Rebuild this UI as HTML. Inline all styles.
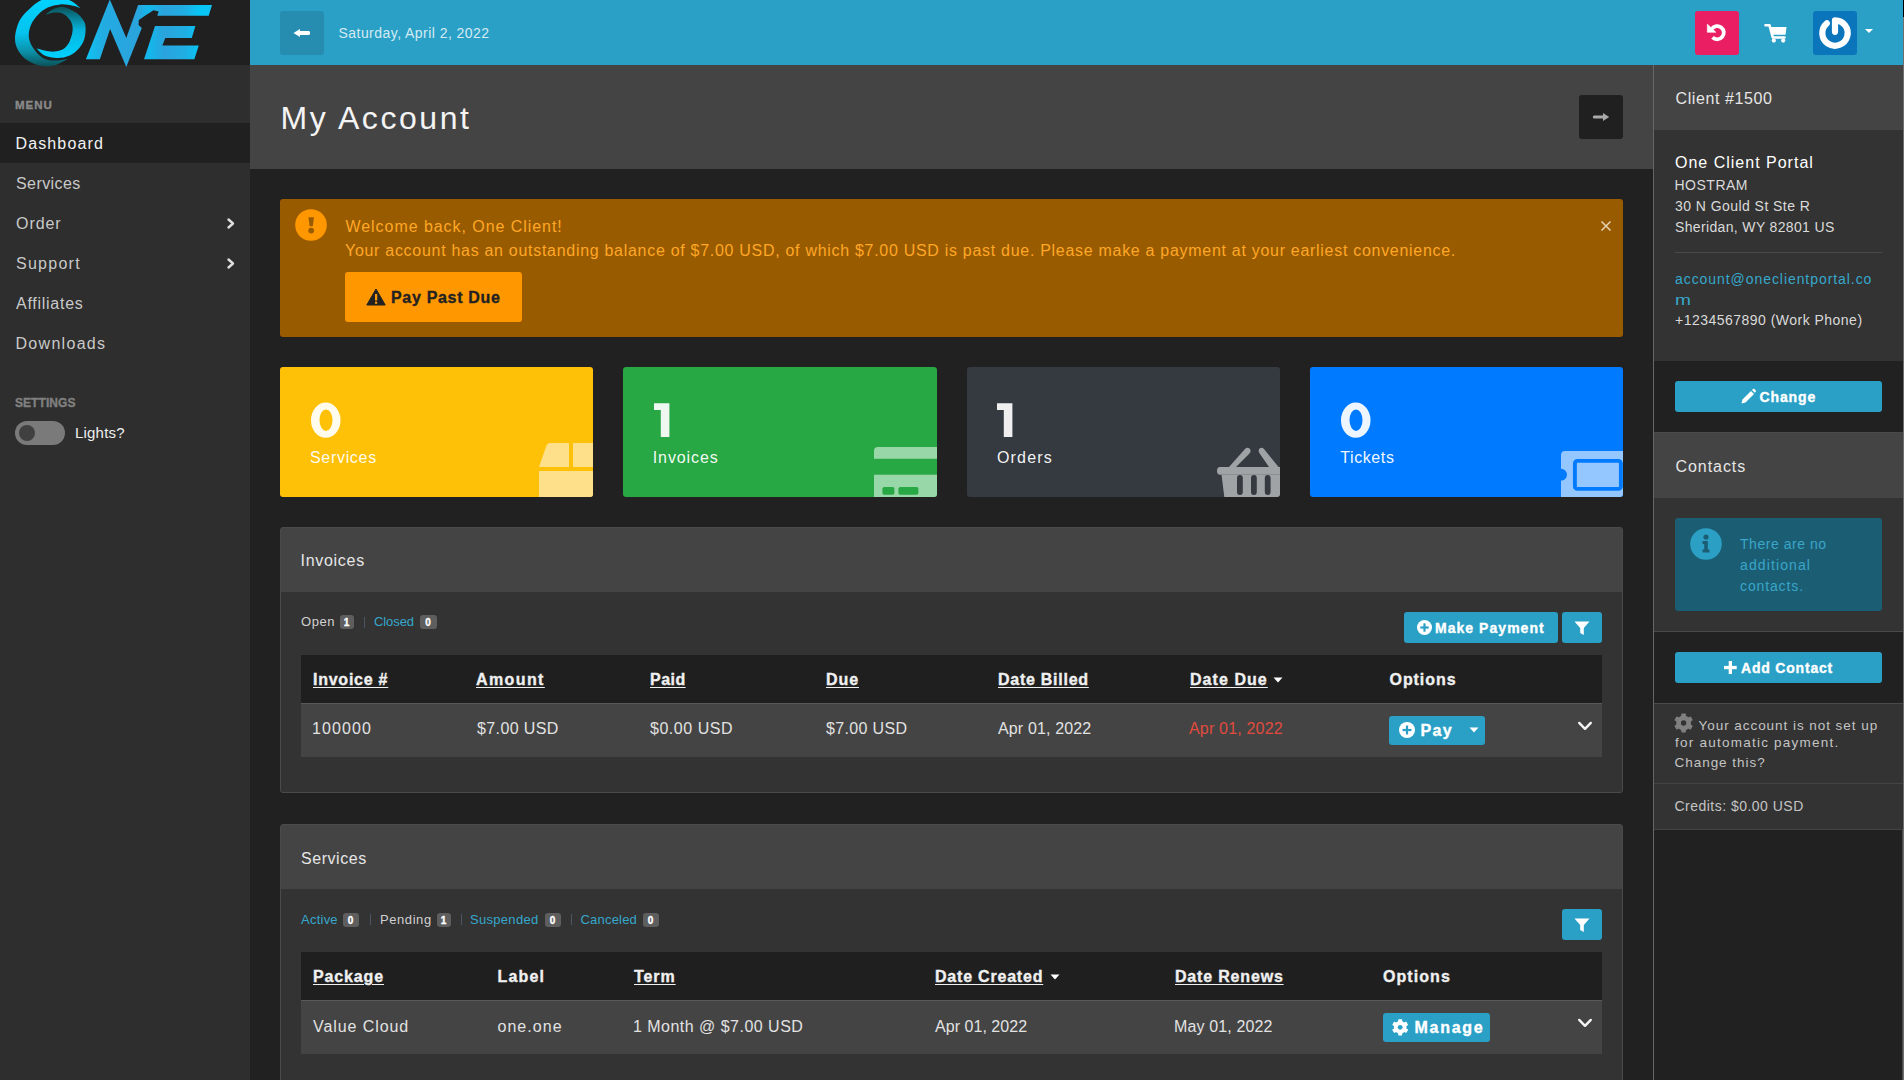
<!DOCTYPE html>
<html><head><meta charset="utf-8"><title>My Account</title>
<style>
html,body{margin:0;padding:0;}
body{width:1904px;height:1080px;overflow:hidden;position:relative;background:#212121;font-family:"Liberation Sans",sans-serif;}
span{display:block;}
svg{overflow:visible;}
</style></head><body>
<div style="position:absolute;left:0px;top:0px;width:250px;height:65px;background:#202020;"></div>
<div style="position:absolute;left:0px;top:65px;width:250px;height:1015px;background:#2e2e2e;"></div>
<svg style="position:absolute;left:0px;top:0px;" width="250" height="70" viewBox="0 0 250 70">
<defs>
<linearGradient id="gO" gradientUnits="userSpaceOnUse" x1="0" y1="0" x2="0" y2="67"><stop offset="0" stop-color="#00d2ff"/><stop offset="0.5" stop-color="#05c2ee"/><stop offset="0.78" stop-color="#0c8ea6"/><stop offset="1" stop-color="#0a4f55"/></linearGradient>
<linearGradient id="gI" gradientUnits="userSpaceOnUse" x1="0" y1="7" x2="0" y2="58"><stop offset="0" stop-color="#0b5358"/><stop offset="0.45" stop-color="#06b4dc"/><stop offset="1" stop-color="#00d2ff"/></linearGradient>
<linearGradient id="gE" gradientUnits="userSpaceOnUse" x1="85" y1="0" x2="213" y2="0"><stop offset="0" stop-color="#0cc6f4"/><stop offset="0.14" stop-color="#22ace2"/><stop offset="0.4" stop-color="#2ba3dc"/><stop offset="0.5" stop-color="#12b8ec"/><stop offset="0.62" stop-color="#2ba3dc"/><stop offset="0.78" stop-color="#20aee3"/><stop offset="0.9" stop-color="#06c6f6"/><stop offset="1" stop-color="#0ec4f2"/></linearGradient>
</defs>
<path fill="url(#gO)" d="M80.5 8.2 C79.2 7.1 75.3 3.3 73.0 1.9 C70.7 0.5 69.9 0.2 66.7 -0.3 C63.5 -0.8 58.2 -1.2 54.0 -1.2 C49.8 -1.1 45.7 -1.8 41.5 0.0 C37.3 1.8 32.6 5.9 28.9 9.4 C25.2 12.9 21.7 16.1 19.4 20.8 C17.1 25.5 15.2 32.9 15.0 37.8 C14.8 42.7 16.1 46.6 18.2 50.4 C20.3 54.2 23.7 57.9 27.6 60.5 C31.5 63.1 37.1 65.3 41.5 66.1 C45.9 66.9 49.8 66.7 54.1 65.5 C58.5 64.3 65.3 60.2 67.6 59.2 C65.3 59.4 58.2 60.7 54.1 60.5 C50.0 60.3 46.1 59.8 42.7 57.9 C39.3 56.0 36.2 52.5 33.9 49.1 C31.6 45.8 29.4 41.8 28.9 37.8 C28.4 33.8 29.2 29.1 30.8 25.2 C32.4 21.3 35.5 17.4 38.3 14.5 C41.1 11.6 44.1 9.3 47.8 7.6 C51.5 5.9 56.2 4.7 60.4 4.4 C64.6 4.1 69.7 5.1 73.0 5.7 C76.3 6.3 79.2 7.8 80.5 8.2 Z"/>
<path fill="url(#gI)" d="M45.3 14.8 C46.8 13.8 51.1 10.1 54.1 8.8 C57.1 7.5 59.8 6.3 63.5 6.9 C67.2 7.5 72.7 10.3 76.1 12.6 C79.5 14.9 82.1 18.2 83.7 20.8 C85.3 23.4 85.5 25.3 85.6 28.3 C85.7 31.3 85.3 35.7 84.3 39.0 C83.2 42.3 81.7 45.2 79.3 47.9 C76.9 50.6 73.5 53.7 69.8 55.4 C66.1 57.1 61.4 57.9 57.2 57.9 C53.0 57.9 48.1 57.0 44.6 55.4 C41.1 53.8 37.8 49.6 36.4 48.5 C37.8 48.8 41.6 49.9 44.6 50.4 C47.6 50.9 51.0 51.8 54.1 51.6 C57.2 51.4 60.9 50.9 63.5 49.1 C66.1 47.3 68.3 44.1 69.8 40.9 C71.3 37.6 72.6 33.0 72.7 29.6 C72.8 26.2 72.0 23.4 70.5 20.8 C69.0 18.2 66.2 15.3 63.5 13.9 C60.8 12.5 57.1 12.4 54.1 12.6 C51.1 12.8 46.8 14.4 45.3 14.8 Z"/>
<path fill="url(#gE)" d="M85.9 59.2 L109.8 -0.5 L126.3 37.9 L138.1 5.1 L212 5.1 L208.7 15.8 L157.2 15.8 L158.7 11.4 L153.5 10.3 Q146 15 138.8 19.9 L138.5 25 L141.8 27.9 L126.3 66.9 L110.1 29 L99.9 59.2 Z"/>
<path fill="url(#gE)" d="M155 26.1 L195.4 26.1 L191.8 37.9 L165.3 37.9 L162.4 45.6 L198.8 45.6 L194.3 59.2 L144 59.2 Z"/>
</svg>
<span id="t_menu" style="position:absolute;left:15.0px;top:99px;font-size:11.5px;font-weight:700;color:#8a8a8a;white-space:pre;line-height:normal;letter-spacing:1.000px;-webkit-text-stroke:0.35px #8a8a8a;">MENU</span>
<div style="position:absolute;left:0px;top:123px;width:250px;height:40px;background:#202020;"></div>
<span id="t_dash" style="position:absolute;left:15.5px;top:135px;font-size:16px;font-weight:400;color:#f2f2f2;white-space:pre;line-height:normal;letter-spacing:1.125px;">Dashboard</span>
<span id="t_svc" style="position:absolute;left:16.0px;top:175px;font-size:16px;font-weight:400;color:#c9c9c9;white-space:pre;line-height:normal;letter-spacing:0.429px;">Services</span>
<span id="t_ord" style="position:absolute;left:16.0px;top:215px;font-size:16px;font-weight:400;color:#c9c9c9;white-space:pre;line-height:normal;letter-spacing:0.950px;">Order</span>
<span id="t_sup" style="position:absolute;left:16.0px;top:255px;font-size:16px;font-weight:400;color:#c9c9c9;white-space:pre;line-height:normal;letter-spacing:1.269px;">Support</span>
<span id="t_aff" style="position:absolute;left:16.0px;top:295px;font-size:16px;font-weight:400;color:#c9c9c9;white-space:pre;line-height:normal;letter-spacing:0.736px;">Affiliates</span>
<span id="t_dl" style="position:absolute;left:15.5px;top:335px;font-size:16px;font-weight:400;color:#c9c9c9;white-space:pre;line-height:normal;letter-spacing:1.300px;">Downloads</span>
<svg style="position:absolute;left:226px;top:218px;" width="10" height="11" viewBox="0 0 10 11"><path d="M2.5 1.5 L7 5.5 L2.5 9.5" fill="none" stroke="#dddddd" stroke-width="2.4" stroke-linecap="round" stroke-linejoin="round"/></svg>
<svg style="position:absolute;left:226px;top:258px;" width="10" height="11" viewBox="0 0 10 11"><path d="M2.5 1.5 L7 5.5 L2.5 9.5" fill="none" stroke="#dddddd" stroke-width="2.4" stroke-linecap="round" stroke-linejoin="round"/></svg>
<span id="t_settings" style="position:absolute;left:15.0px;top:396px;font-size:12px;font-weight:700;color:#808080;white-space:pre;line-height:normal;letter-spacing:0.056px;-webkit-text-stroke:0.35px #808080;">SETTINGS</span>
<div style="position:absolute;left:15px;top:421px;width:50px;height:24px;background:#7a7a7a;border-radius:12px;"></div>
<div style="position:absolute;left:19px;top:425px;width:16px;height:16px;background:#404040;border-radius:8px;"></div>
<span id="t_lights" style="position:absolute;left:75.0px;top:424px;font-size:15px;font-weight:400;color:#eeeeee;white-space:pre;line-height:normal;letter-spacing:0.200px;">Lights?</span>
<div style="position:absolute;left:250px;top:0px;width:1654px;height:65px;background:#2ba0c6;"></div>
<div style="position:absolute;left:280px;top:11px;width:44px;height:44px;background:#268db0;border-radius:3px;"></div>
<svg style="position:absolute;left:293px;top:28px;" width="18" height="10" viewBox="0 0 18 10"><path d="M0.5 5 L7 0.9 L7 3.1 L15.8 3.1 Q17.2 3.1 17.2 5 Q17.2 6.9 15.8 6.9 L7 6.9 L7 9.1 Z" fill="#fff"/></svg>
<span id="t_date" style="position:absolute;left:338.5px;top:25px;font-size:14px;font-weight:400;color:#d4ebf3;white-space:pre;line-height:normal;letter-spacing:0.455px;">Saturday, April 2, 2022</span>
<div style="position:absolute;left:1695px;top:11px;width:44px;height:44px;background:#e91e63;border-radius:3px;"></div>
<svg style="position:absolute;left:1705px;top:22px;" width="22" height="22" viewBox="0 0 22 22"><path d="M7.53 15.37 A6.6 6.6 0 1 0 6.79 6.91" fill="none" stroke="#fff" stroke-width="3.8"/><path d="M2.3 2.1 L2.3 10.3 L10.9 10.3 Z" fill="#fff" stroke="#fff" stroke-width="0.6" stroke-linejoin="round"/></svg>
<svg style="position:absolute;left:1764px;top:22px;" width="24" height="22" viewBox="0 0 24 22"><path d="M1.5 3.2 L5.5 3.2 L8.8 15.5 L20.5 15.5" fill="none" stroke="#fff" stroke-width="2.6" stroke-linecap="round" stroke-linejoin="round"/><path d="M6.5 5 L22.5 5 L21.5 12.8 L8.5 12.8 Z" fill="#fff"/><circle cx="9.8" cy="18.6" r="2.1" fill="#fff"/><circle cx="19.2" cy="18.6" r="2.1" fill="#fff"/></svg>
<div style="position:absolute;left:1813px;top:11px;width:44px;height:44px;background:#0b75bc;border-radius:3px;"></div>
<svg style="position:absolute;left:1813px;top:11px;" width="44" height="44" viewBox="0 0 44 44"><path d="M13.84 12.27 A12.7 12.7 0 1 0 22 9.3 L22 20.8" fill="none" stroke="#fff" stroke-width="6.2" stroke-linecap="round" stroke-linejoin="round"/></svg>
<svg style="position:absolute;left:1864px;top:28px;" width="10" height="6" viewBox="0 0 10 6"><path d="M1 1 L9 1 L5 5 Z" fill="#fff"/></svg>
<div style="position:absolute;left:1902px;top:65px;width:1px;height:1015px;background:#4a4a4a;"></div>
<div style="position:absolute;left:1903px;top:0px;width:1px;height:1080px;background:#6e6e6e;"></div>
<div style="position:absolute;left:1903px;top:0px;width:1px;height:17px;background:#000;"></div>
<div style="position:absolute;left:250px;top:65px;width:1403px;height:104px;background:#444444;"></div>
<span id="t_title" style="position:absolute;left:280.5px;top:100px;font-size:32px;font-weight:400;color:#f4f4f4;white-space:pre;line-height:normal;letter-spacing:2.556px;">My Account</span>
<div style="position:absolute;left:1579px;top:95px;width:44px;height:44px;background:#202020;border-radius:3px;"></div>
<svg style="position:absolute;left:1592px;top:112px;" width="18" height="10" viewBox="0 0 18 10"><path d="M17.2 5 L11 1 L11 3.4 L2.2 3.4 Q0.8 3.4 0.8 5 Q0.8 6.6 2.2 6.6 L11 6.6 L11 9 Z" fill="#a9a9a9"/></svg>
<div style="position:absolute;left:280px;top:199px;width:1343px;height:138px;background:#995b00;border-radius:3px;"></div>
<svg style="position:absolute;left:295px;top:209px;" width="32" height="32" viewBox="0 0 32 32"><circle cx="16" cy="16" r="15.8" fill="#ff9800"/><path d="M13.4 8.2 L19 8.2 L17.8 17.2 L14.6 17.2 Z" fill="#995b00"/><circle cx="16.2" cy="21.6" r="2.9" fill="#995b00"/></svg>
<span id="t_welcome" style="position:absolute;left:345.5px;top:218px;font-size:16px;font-weight:400;color:#ffa726;white-space:pre;line-height:normal;letter-spacing:0.945px;">Welcome back, One Client!</span>
<span id="t_balance" style="position:absolute;left:345.0px;top:242px;font-size:16px;font-weight:400;color:#ffa726;white-space:pre;line-height:normal;letter-spacing:0.706px;">Your account has an outstanding balance of $7.00 USD, of which $7.00 USD is past due. Please make a payment at your earliest convenience.</span>
<svg style="position:absolute;left:1600px;top:220px;" width="12" height="12" viewBox="0 0 12 12"><path d="M1.5 1.5 L10.5 10.5 M10.5 1.5 L1.5 10.5" stroke="#e6d3b3" stroke-width="1.5"/></svg>
<div style="position:absolute;left:345px;top:272px;width:177px;height:50px;background:#ff9800;border-radius:3px;"></div>
<svg style="position:absolute;left:366px;top:288px;" width="20" height="18" viewBox="0 0 20 18"><path d="M10 1 L19.2 17 L0.8 17 Z" fill="#222" stroke="#222" stroke-width="1" stroke-linejoin="round"/><rect x="9" y="6" width="2.2" height="6.5" fill="#ff9800"/><rect x="9" y="13.6" width="2.2" height="2.2" fill="#ff9800"/></svg>
<span id="t_paypast" style="position:absolute;left:391.0px;top:289px;font-size:16px;font-weight:700;color:#222222;white-space:pre;line-height:normal;letter-spacing:0.688px;-webkit-text-stroke:0.35px #222222;">Pay Past Due</span>
<div style="position:absolute;left:280px;top:367px;width:313.25px;height:130px;background:#ffc107;border-radius:3px;"></div>
<svg style="position:absolute;left:311px;top:402px;" width="30" height="36" viewBox="0 0 30 36"><path fill-rule="evenodd" fill="rgba(255,255,255,0.93)" d="M14.75 0.6 A14.75 17.6 0 1 1 14.75 35.8 A14.75 17.6 0 1 1 14.75 0.6 Z M15 7.4 A6.5 10.75 0 1 0 15 28.9 A6.5 10.75 0 1 0 15 7.4 Z"/></svg>
<span id="t_lab0" style="position:absolute;left:310.0px;top:449px;font-size:16px;font-weight:400;color:rgba(255,255,255,0.96);white-space:pre;line-height:normal;letter-spacing:0.683px;">Services</span>
<div style="position:absolute;left:623.25px;top:367px;width:313.25px;height:130px;background:#28a745;border-radius:3px;"></div>
<svg style="position:absolute;left:653.55px;top:403px;" width="16" height="34" viewBox="0 0 16 34"><path fill="rgba(255,255,255,0.92)" d="M0 0.2 L15.4 0.2 L15.4 34 L6.8 34 L6.8 7 L0 7 Z"/></svg>
<span id="t_lab1" style="position:absolute;left:652.78px;top:449px;font-size:16px;font-weight:400;color:rgba(255,255,255,0.96);white-space:pre;line-height:normal;letter-spacing:0.888px;">Invoices</span>
<div style="position:absolute;left:966.5px;top:367px;width:313.25px;height:130px;background:#343a40;border-radius:3px;"></div>
<svg style="position:absolute;left:996.8px;top:403px;" width="16" height="34" viewBox="0 0 16 34"><path fill="rgba(255,255,255,0.92)" d="M0 0.2 L15.4 0.2 L15.4 34 L6.8 34 L6.8 7 L0 7 Z"/></svg>
<span id="t_lab2" style="position:absolute;left:997.0px;top:449px;font-size:16px;font-weight:400;color:rgba(255,255,255,0.96);white-space:pre;line-height:normal;letter-spacing:1.160px;">Orders</span>
<div style="position:absolute;left:1309.75px;top:367px;width:313.25px;height:130px;background:#007bff;border-radius:3px;"></div>
<svg style="position:absolute;left:1340.75px;top:402px;" width="30" height="36" viewBox="0 0 30 36"><path fill-rule="evenodd" fill="rgba(255,255,255,0.93)" d="M14.75 0.6 A14.75 17.6 0 1 1 14.75 35.8 A14.75 17.6 0 1 1 14.75 0.6 Z M15 7.4 A6.5 10.75 0 1 0 15 28.9 A6.5 10.75 0 1 0 15 7.4 Z"/></svg>
<span id="t_lab3" style="position:absolute;left:1340.23px;top:449px;font-size:16px;font-weight:400;color:rgba(255,255,255,0.96);white-space:pre;line-height:normal;letter-spacing:0.599px;">Tickets</span>
<div style="position:absolute;left:280px;top:367px;width:313.25px;height:130px;overflow:hidden;border-radius:3px;"><svg style="position:absolute;left:258px;top:75px;" width="60" height="60"><path d="M1 25 L8.5 3.5 Q9.5 1 12 1 L31 1 L31 25 Z" fill="#ffe08a"/><rect x="35" y="1" width="25" height="24" fill="#ffe08a"/><path d="M1 29 L60 29 L60 60 L1 60 Z" fill="#ffe08a"/></svg></div>
<div style="position:absolute;left:623.25px;top:367px;width:313.25px;height:130px;overflow:hidden;border-radius:3px;"><svg style="position:absolute;left:249.75px;top:79px;" width="70" height="56"><path d="M1 12.8 L1 5 Q1 1 5 1 L70 1 L70 12.8 Z" fill="#98d8a8"/><rect x="1" y="28.7" width="69" height="30" fill="#98d8a8"/><rect x="9.4" y="41" width="12" height="7.8" rx="1.8" fill="#28a745"/><rect x="25.4" y="41" width="20" height="7.8" rx="1.8" fill="#28a745"/></svg></div>
<div style="position:absolute;left:966.5px;top:367px;width:313.25px;height:130px;overflow:hidden;border-radius:3px;"><svg style="position:absolute;left:249.5px;top:79px;" width="70" height="56"><path d="M13 21 L29 3 Q31 0.8 33.5 2.5 Q36 5 33 8 L20 21 Z" fill="#a0a3a6"/><path d="M62.5 21 L48 3 Q46 0.8 43.5 2.5 Q41.5 5 44 8 L53 21 Z" fill="#a0a3a6"/><path d="M4 21 L70 21 L70 28.7 L4 28.7 Q1 28.7 1 24.8 Q1 21 4 21 Z" fill="#a0a3a6"/><path d="M5.5 28.7 L70 28.7 L70 56 L9 56 Z" fill="#a0a3a6"/><rect x="21" y="29" width="5.8" height="20" rx="2.9" fill="#343a40"/><rect x="35" y="29" width="5.8" height="20" rx="2.9" fill="#343a40"/><rect x="48.8" y="29" width="5.8" height="20" rx="2.9" fill="#343a40"/></svg></div>
<div style="position:absolute;left:1309.75px;top:367px;width:313.25px;height:130px;overflow:hidden;border-radius:3px;"><svg style="position:absolute;left:250.25px;top:83px;" width="70" height="52"><path d="M1 5 Q1 1 5 1 L70 1 L70 52 L1 52 L1 30.8 A6 6 0 0 0 1 18.8 Z" fill="#94c6ff"/><rect x="14.9" y="10.9" width="46" height="28" rx="2.5" fill="none" stroke="#007bff" stroke-width="3.9"/></svg></div>
<div style="position:absolute;left:280px;top:527px;width:1343px;height:266px;background:#333333;border-radius:3px;box-sizing:border-box;border:1px solid #4a4a4a;"></div>
<div style="position:absolute;left:281px;top:528px;width:1341px;height:64px;background:#444444;"></div>
<span id="t_p_inv" style="position:absolute;left:300.5px;top:552px;font-size:16px;font-weight:400;color:#e6e6e6;white-space:pre;line-height:normal;letter-spacing:0.714px;">Invoices</span>
<span id="t_open" style="position:absolute;left:301.0px;top:614px;font-size:13px;font-weight:400;color:#d0d0d0;white-space:pre;line-height:normal;letter-spacing:0.598px;">Open</span>
<div style="position:absolute;left:340px;top:615px;width:14px;height:14px;background:#5e5e5e;border-radius:3px;"></div>
<span id="t_b_340" style="position:absolute;left:343.75px;top:617px;font-size:10px;font-weight:700;color:#ffffff;white-space:pre;line-height:normal;-webkit-text-stroke:0.35px #ffffff;">1</span>
<div style="position:absolute;left:364px;top:617px;width:1px;height:11px;background:#4a5563;"></div>
<span id="t_closed" style="position:absolute;left:374.0px;top:614px;font-size:13px;font-weight:400;color:#36a8cc;white-space:pre;line-height:normal;letter-spacing:-0.080px;">Closed</span>
<div style="position:absolute;left:420px;top:615px;width:17px;height:14px;background:#5e5e5e;border-radius:3px;"></div>
<span id="t_b_420" style="position:absolute;left:425.25px;top:617px;font-size:10px;font-weight:700;color:#ffffff;white-space:pre;line-height:normal;-webkit-text-stroke:0.35px #ffffff;">0</span>
<div style="position:absolute;left:1404px;top:612px;width:154px;height:31px;background:#2ba0c6;border-radius:3px;"></div>
<svg style="position:absolute;left:1416.5px;top:620px;" width="15" height="15" viewBox="0 0 15 15"><circle cx="7.5" cy="7.5" r="7.5" fill="#fff"/><rect x="6.4" y="3.3" width="2.2" height="8.4" fill="#2ba0c6"/><rect x="3.3" y="6.4" width="8.4" height="2.2" fill="#2ba0c6"/></svg>
<span id="t_mkpay" style="position:absolute;left:1435.0px;top:620px;font-size:14px;font-weight:700;color:#ffffff;white-space:pre;line-height:normal;letter-spacing:1.039px;-webkit-text-stroke:0.35px #ffffff;">Make Payment</span>
<div style="position:absolute;left:1562px;top:612px;width:40px;height:31px;background:#2ba0c6;border-radius:3px;"></div>
<svg style="position:absolute;left:1574px;top:620.5px;" width="16" height="15" viewBox="0 0 16 15"><path d="M0.5 0.5 L15.5 0.5 L9.8 7 L9.8 14 L6.2 12 L6.2 7 Z" fill="#fff"/></svg>
<div style="position:absolute;left:301px;top:655px;width:1301px;height:48px;background:#1f1f1f;"></div>
<div style="position:absolute;left:301px;top:703px;width:1301px;height:1px;background:#5a5a5a;"></div>
<div style="position:absolute;left:301px;top:704px;width:1301px;height:53px;background:#444444;"></div>
<span id="t_h_inv" style="position:absolute;left:313.0px;top:671px;font-size:16px;font-weight:700;color:#f0f0f0;white-space:pre;line-height:normal;letter-spacing:0.750px;-webkit-text-stroke:0.35px #f0f0f0;text-decoration:underline;text-underline-offset:2px;text-decoration-thickness:1px;">Invoice #</span>
<span id="t_h_amt" style="position:absolute;left:476.0px;top:671px;font-size:16px;font-weight:700;color:#f0f0f0;white-space:pre;line-height:normal;letter-spacing:1.400px;-webkit-text-stroke:0.35px #f0f0f0;text-decoration:underline;text-underline-offset:2px;text-decoration-thickness:1px;">Amount</span>
<span id="t_h_paid" style="position:absolute;left:650.0px;top:671px;font-size:16px;font-weight:700;color:#f0f0f0;white-space:pre;line-height:normal;letter-spacing:0.466px;-webkit-text-stroke:0.35px #f0f0f0;text-decoration:underline;text-underline-offset:2px;text-decoration-thickness:1px;">Paid</span>
<span id="t_h_due" style="position:absolute;left:826.0px;top:671px;font-size:16px;font-weight:700;color:#f0f0f0;white-space:pre;line-height:normal;letter-spacing:0.900px;-webkit-text-stroke:0.35px #f0f0f0;text-decoration:underline;text-underline-offset:2px;text-decoration-thickness:1px;">Due</span>
<span id="t_h_db" style="position:absolute;left:998.0px;top:671px;font-size:16px;font-weight:700;color:#f0f0f0;white-space:pre;line-height:normal;letter-spacing:0.740px;-webkit-text-stroke:0.35px #f0f0f0;text-decoration:underline;text-underline-offset:2px;text-decoration-thickness:1px;">Date Billed</span>
<span id="t_h_dd" style="position:absolute;left:1190.0px;top:671px;font-size:16px;font-weight:700;color:#f0f0f0;white-space:pre;line-height:normal;letter-spacing:1.056px;-webkit-text-stroke:0.35px #f0f0f0;text-decoration:underline;text-underline-offset:2px;text-decoration-thickness:1px;">Date Due</span>
<span id="t_h_opt" style="position:absolute;left:1389.5px;top:671px;font-size:16px;font-weight:700;color:#f0f0f0;white-space:pre;line-height:normal;letter-spacing:0.932px;-webkit-text-stroke:0.35px #f0f0f0;">Options</span>
<svg style="position:absolute;left:1273px;top:677px;" width="10" height="6" viewBox="0 0 10 6"><path d="M0.5 0.5 L9.5 0.5 L5 5.5 Z" fill="#fff"/></svg>
<span id="t_r_inv" style="position:absolute;left:312.0px;top:720px;font-size:16px;font-weight:400;color:#e2e2e2;white-space:pre;line-height:normal;letter-spacing:1.120px;">100000</span>
<span id="t_r_amt" style="position:absolute;left:477.0px;top:720px;font-size:16px;font-weight:400;color:#e2e2e2;white-space:pre;line-height:normal;letter-spacing:0.381px;">$7.00 USD</span>
<span id="t_r_paid" style="position:absolute;left:650.0px;top:720px;font-size:16px;font-weight:400;color:#e2e2e2;white-space:pre;line-height:normal;letter-spacing:0.525px;">$0.00 USD</span>
<span id="t_r_due" style="position:absolute;left:826.0px;top:720px;font-size:16px;font-weight:400;color:#e2e2e2;white-space:pre;line-height:normal;letter-spacing:0.350px;">$7.00 USD</span>
<span id="t_r_db" style="position:absolute;left:998.0px;top:720px;font-size:16px;font-weight:400;color:#e2e2e2;white-space:pre;line-height:normal;letter-spacing:0.148px;">Apr 01, 2022</span>
<span id="t_r_dd" style="position:absolute;left:1189.0px;top:720px;font-size:16px;font-weight:400;color:#e04b3e;white-space:pre;line-height:normal;letter-spacing:0.182px;">Apr 01, 2022</span>
<div style="position:absolute;left:1389px;top:716px;width:96px;height:29px;background:#2ba0c6;border-radius:3px;"></div>
<svg style="position:absolute;left:1398.5px;top:722px;" width="16" height="16" viewBox="0 0 16 16"><circle cx="8.0" cy="8.0" r="8.0" fill="#fff"/><rect x="6.9" y="3.52" width="2.2" height="8.96" fill="#2ba0c6"/><rect x="3.52" y="6.9" width="8.96" height="2.2" fill="#2ba0c6"/></svg>
<span id="t_pay" style="position:absolute;left:1420.5px;top:722px;font-size:16px;font-weight:700;color:#ffffff;white-space:pre;line-height:normal;letter-spacing:1.300px;-webkit-text-stroke:0.35px #ffffff;">Pay</span>
<svg style="position:absolute;left:1469px;top:727px;" width="10" height="6" viewBox="0 0 10 6"><path d="M0.5 0.5 L9.5 0.5 L5 5.5 Z" fill="#fff"/></svg>
<svg style="position:absolute;left:1577px;top:720px;" width="16" height="11" viewBox="0 0 16 11"><path d="M2.2 2.9 L8 8.8 L13.8 2.9" fill="none" stroke="#f4f4f4" stroke-width="2.4" stroke-linecap="round" stroke-linejoin="round"/></svg>
<div style="position:absolute;left:280px;top:824px;width:1343px;height:300px;background:#333333;border-radius:3px;box-sizing:border-box;border:1px solid #4a4a4a;"></div>
<div style="position:absolute;left:281px;top:825px;width:1341px;height:64px;background:#444444;"></div>
<span id="t_p_svc" style="position:absolute;left:301.0px;top:849.5px;font-size:16px;font-weight:400;color:#e6e6e6;white-space:pre;line-height:normal;letter-spacing:0.541px;">Services</span>
<span id="t_f_act" style="position:absolute;left:301.0px;top:911.5px;font-size:13px;font-weight:400;color:#36a8cc;white-space:pre;line-height:normal;letter-spacing:0.240px;">Active</span>
<div style="position:absolute;left:343px;top:912.5px;width:16px;height:14px;background:#5e5e5e;border-radius:3px;"></div>
<span id="t_b_343" style="position:absolute;left:347.75px;top:914.5px;font-size:10px;font-weight:700;color:#ffffff;white-space:pre;line-height:normal;-webkit-text-stroke:0.35px #ffffff;">0</span>
<div style="position:absolute;left:370px;top:914px;width:1px;height:11px;background:#4a5563;"></div>
<span id="t_f_pen" style="position:absolute;left:380.0px;top:911.5px;font-size:13px;font-weight:400;color:#d0d0d0;white-space:pre;line-height:normal;letter-spacing:0.568px;">Pending</span>
<div style="position:absolute;left:437px;top:912.5px;width:14px;height:14px;background:#5e5e5e;border-radius:3px;"></div>
<span id="t_b_437" style="position:absolute;left:440.75px;top:914.5px;font-size:10px;font-weight:700;color:#ffffff;white-space:pre;line-height:normal;-webkit-text-stroke:0.35px #ffffff;">1</span>
<div style="position:absolute;left:461px;top:914px;width:1px;height:11px;background:#4a5563;"></div>
<span id="t_f_sus" style="position:absolute;left:470.0px;top:911.5px;font-size:13px;font-weight:400;color:#36a8cc;white-space:pre;line-height:normal;letter-spacing:0.300px;">Suspended</span>
<div style="position:absolute;left:545px;top:912.5px;width:16px;height:14px;background:#5e5e5e;border-radius:3px;"></div>
<span id="t_b_545" style="position:absolute;left:549.75px;top:914.5px;font-size:10px;font-weight:700;color:#ffffff;white-space:pre;line-height:normal;-webkit-text-stroke:0.35px #ffffff;">0</span>
<div style="position:absolute;left:571px;top:914px;width:1px;height:11px;background:#4a5563;"></div>
<span id="t_f_can" style="position:absolute;left:580.5px;top:911.5px;font-size:13px;font-weight:400;color:#36a8cc;white-space:pre;line-height:normal;letter-spacing:0.199px;">Canceled</span>
<div style="position:absolute;left:643px;top:912.5px;width:16px;height:14px;background:#5e5e5e;border-radius:3px;"></div>
<span id="t_b_643" style="position:absolute;left:647.75px;top:914.5px;font-size:10px;font-weight:700;color:#ffffff;white-space:pre;line-height:normal;-webkit-text-stroke:0.35px #ffffff;">0</span>
<div style="position:absolute;left:1562px;top:909px;width:40px;height:31px;background:#2ba0c6;border-radius:3px;"></div>
<svg style="position:absolute;left:1574px;top:917.5px;" width="16" height="15" viewBox="0 0 16 15"><path d="M0.5 0.5 L15.5 0.5 L9.8 7 L9.8 14 L6.2 12 L6.2 7 Z" fill="#fff"/></svg>
<div style="position:absolute;left:301px;top:952px;width:1301px;height:48px;background:#1f1f1f;"></div>
<div style="position:absolute;left:301px;top:1000px;width:1301px;height:1px;background:#5a5a5a;"></div>
<div style="position:absolute;left:301px;top:1001px;width:1301px;height:53px;background:#444444;"></div>
<span id="t_h_pkg" style="position:absolute;left:313.0px;top:968px;font-size:16px;font-weight:700;color:#f0f0f0;white-space:pre;line-height:normal;letter-spacing:0.869px;-webkit-text-stroke:0.35px #f0f0f0;text-decoration:underline;text-underline-offset:2px;text-decoration-thickness:1px;">Package</span>
<span id="t_h_lab" style="position:absolute;left:497.5px;top:968px;font-size:16px;font-weight:700;color:#f0f0f0;white-space:pre;line-height:normal;letter-spacing:1.150px;-webkit-text-stroke:0.35px #f0f0f0;">Label</span>
<span id="t_h_term" style="position:absolute;left:634.0px;top:968px;font-size:16px;font-weight:700;color:#f0f0f0;white-space:pre;line-height:normal;letter-spacing:0.932px;-webkit-text-stroke:0.35px #f0f0f0;text-decoration:underline;text-underline-offset:2px;text-decoration-thickness:1px;">Term</span>
<span id="t_h_dc" style="position:absolute;left:935.0px;top:968px;font-size:16px;font-weight:700;color:#f0f0f0;white-space:pre;line-height:normal;letter-spacing:0.796px;-webkit-text-stroke:0.35px #f0f0f0;text-decoration:underline;text-underline-offset:2px;text-decoration-thickness:1px;">Date Created</span>
<span id="t_h_dr" style="position:absolute;left:1175.0px;top:968px;font-size:16px;font-weight:700;color:#f0f0f0;white-space:pre;line-height:normal;letter-spacing:0.820px;-webkit-text-stroke:0.35px #f0f0f0;text-decoration:underline;text-underline-offset:2px;text-decoration-thickness:1px;">Date Renews</span>
<span id="t_h_opt2" style="position:absolute;left:1383.0px;top:968px;font-size:16px;font-weight:700;color:#f0f0f0;white-space:pre;line-height:normal;letter-spacing:1.068px;-webkit-text-stroke:0.35px #f0f0f0;">Options</span>
<svg style="position:absolute;left:1050px;top:974px;" width="10" height="6" viewBox="0 0 10 6"><path d="M0.5 0.5 L9.5 0.5 L5 5.5 Z" fill="#fff"/></svg>
<span id="t_r_pkg" style="position:absolute;left:313.0px;top:1017.5px;font-size:16px;font-weight:400;color:#e2e2e2;white-space:pre;line-height:normal;letter-spacing:0.920px;">Value Cloud</span>
<span id="t_r_lab" style="position:absolute;left:497.5px;top:1017.5px;font-size:16px;font-weight:400;color:#e2e2e2;white-space:pre;line-height:normal;letter-spacing:1.037px;">one.one</span>
<span id="t_r_term" style="position:absolute;left:633.0px;top:1017.5px;font-size:16px;font-weight:400;color:#e2e2e2;white-space:pre;line-height:normal;letter-spacing:0.480px;">1 Month @ $7.00 USD</span>
<span id="t_r_dc" style="position:absolute;left:935.0px;top:1017.5px;font-size:16px;font-weight:400;color:#e2e2e2;white-space:pre;line-height:normal;letter-spacing:0.040px;">Apr 01, 2022</span>
<span id="t_r_dr" style="position:absolute;left:1174.0px;top:1017.5px;font-size:16px;font-weight:400;color:#e2e2e2;white-space:pre;line-height:normal;letter-spacing:0.131px;">May 01, 2022</span>
<div style="position:absolute;left:1383px;top:1013px;width:107px;height:29px;background:#2ba0c6;border-radius:3px;"></div>
<svg style="position:absolute;left:1392px;top:1019px;" width="17" height="17" viewBox="0 0 17 17"><g transform="translate(8.2,8.3)"><circle r="6.3" fill="#fff"/><rect x="-2" y="-8.1" width="4" height="3.5" rx="0.6" fill="#fff" transform="rotate(0)"/><rect x="-2" y="-8.1" width="4" height="3.5" rx="0.6" fill="#fff" transform="rotate(60)"/><rect x="-2" y="-8.1" width="4" height="3.5" rx="0.6" fill="#fff" transform="rotate(120)"/><rect x="-2" y="-8.1" width="4" height="3.5" rx="0.6" fill="#fff" transform="rotate(180)"/><rect x="-2" y="-8.1" width="4" height="3.5" rx="0.6" fill="#fff" transform="rotate(240)"/><rect x="-2" y="-8.1" width="4" height="3.5" rx="0.6" fill="#fff" transform="rotate(300)"/><circle r="2.4" fill="#2ba0c6"/></g></svg>
<span id="t_manage" style="position:absolute;left:1414.5px;top:1019px;font-size:16px;font-weight:700;color:#ffffff;white-space:pre;line-height:normal;letter-spacing:1.720px;-webkit-text-stroke:0.35px #ffffff;">Manage</span>
<svg style="position:absolute;left:1577px;top:1017px;" width="16" height="11" viewBox="0 0 16 11"><path d="M2.2 2.9 L8 8.8 L13.8 2.9" fill="none" stroke="#f4f4f4" stroke-width="2.4" stroke-linecap="round" stroke-linejoin="round"/></svg>
<div style="position:absolute;left:1653px;top:65px;width:1px;height:1015px;background:#666666;"></div>
<div style="position:absolute;left:1654px;top:65px;width:249px;height:65px;background:#444444;"></div>
<span id="t_client" style="position:absolute;left:1675.5px;top:90px;font-size:16px;font-weight:400;color:#e6e6e6;white-space:pre;line-height:normal;letter-spacing:0.585px;">Client #1500</span>
<div style="position:absolute;left:1654px;top:130px;width:249px;height:231px;background:#333333;"></div>
<span id="t_ocp" style="position:absolute;left:1675.0px;top:154px;font-size:16px;font-weight:400;color:#ffffff;white-space:pre;line-height:normal;letter-spacing:1.000px;">One Client Portal</span>
<span id="t_host" style="position:absolute;left:1674.5px;top:177px;font-size:14px;font-weight:400;color:#dadada;white-space:pre;line-height:normal;letter-spacing:0.500px;">HOSTRAM</span>
<span id="t_addr1" style="position:absolute;left:1675.0px;top:197.7px;font-size:14px;font-weight:400;color:#dadada;white-space:pre;line-height:normal;letter-spacing:0.445px;">30 N Gould St Ste R</span>
<span id="t_addr2" style="position:absolute;left:1675.0px;top:218.7px;font-size:14px;font-weight:400;color:#dadada;white-space:pre;line-height:normal;letter-spacing:0.350px;">Sheridan, WY 82801 US</span>
<div style="position:absolute;left:1675px;top:252px;width:207px;height:1px;background:#4a4a4a;"></div>
<span id="t_email" style="position:absolute;left:1675.0px;top:270.5px;font-size:14px;font-weight:400;color:#36a8cc;white-space:pre;line-height:normal;letter-spacing:0.936px;">account@oneclientportal.co</span>
<span id="t_email2" style="position:absolute;left:1674.5px;top:292.2px;font-size:14px;font-weight:400;color:#36a8cc;white-space:pre;line-height:normal;transform:scaleX(1.3706);transform-origin:0 0;">m</span>
<span id="t_phone" style="position:absolute;left:1675.0px;top:312.2px;font-size:14px;font-weight:400;color:#dadada;white-space:pre;line-height:normal;letter-spacing:0.479px;">+1234567890 (Work Phone)</span>
<div style="position:absolute;left:1654px;top:361px;width:249px;height:71px;background:#212121;"></div>
<div style="position:absolute;left:1675px;top:381px;width:207px;height:31px;background:#2ba0c6;border-radius:3px;"></div>
<svg style="position:absolute;left:1740px;top:389px;" width="16" height="16" viewBox="0 0 16 16"><path d="M1.5 14.5 L2.5 10.5 L11 2 L14 5 L5.5 13.5 Z" fill="#fff"/><path d="M12 1 L13 0 Q14 -0.5 15 0.5 L15.5 1 Q16.5 2 15.5 3 L14.8 3.8 Z" fill="#fff"/></svg>
<span id="t_change" style="position:absolute;left:1759.5px;top:389.2px;font-size:14px;font-weight:700;color:#ffffff;white-space:pre;line-height:normal;letter-spacing:0.880px;-webkit-text-stroke:0.35px #ffffff;">Change</span>
<div style="position:absolute;left:1654px;top:432px;width:249px;height:1px;background:#4a4a4a;"></div>
<div style="position:absolute;left:1654px;top:433px;width:249px;height:65px;background:#444444;"></div>
<span id="t_contacts" style="position:absolute;left:1675.5px;top:458px;font-size:16px;font-weight:400;color:#e6e6e6;white-space:pre;line-height:normal;letter-spacing:0.940px;">Contacts</span>
<div style="position:absolute;left:1654px;top:498px;width:249px;height:133px;background:#333333;"></div>
<div style="position:absolute;left:1675px;top:518px;width:207px;height:93px;background:#1b5e74;border-radius:3px;"></div>
<svg style="position:absolute;left:1690px;top:528px;" width="32" height="32" viewBox="0 0 32 32"><circle cx="16" cy="16" r="15.8" fill="#2b9fc4"/><circle cx="16" cy="9" r="2.6" fill="#1b5e74"/><path d="M12.5 13 L17.8 13 L17.8 21.5 L19.5 21.5 L19.5 24.5 L12.5 24.5 L12.5 21.5 L14.2 21.5 L14.2 16 L12.5 16 Z" fill="#1b5e74"/></svg>
<span id="t_nc1" style="position:absolute;left:1740.0px;top:535.7px;font-size:14px;font-weight:400;color:#3aa5c8;white-space:pre;line-height:normal;letter-spacing:0.545px;">There are no</span>
<span id="t_nc2" style="position:absolute;left:1740.0px;top:556.8px;font-size:14px;font-weight:400;color:#3aa5c8;white-space:pre;line-height:normal;letter-spacing:1.111px;">additional</span>
<span id="t_nc3" style="position:absolute;left:1740.0px;top:578px;font-size:14px;font-weight:400;color:#3aa5c8;white-space:pre;line-height:normal;letter-spacing:0.875px;">contacts.</span>
<div style="position:absolute;left:1654px;top:631px;width:249px;height:1px;background:#4a4a4a;"></div>
<div style="position:absolute;left:1654px;top:632px;width:249px;height:71px;background:#212121;"></div>
<div style="position:absolute;left:1675px;top:652px;width:207px;height:31px;background:#2ba0c6;border-radius:3px;"></div>
<svg style="position:absolute;left:1723px;top:660px;" width="15" height="15" viewBox="0 0 15 15"><rect x="5.7" y="1" width="3.3" height="13" fill="#fff"/><rect x="1" y="5.9" width="12.7" height="3.3" fill="#fff"/></svg>
<span id="t_addc" style="position:absolute;left:1741.0px;top:660px;font-size:14px;font-weight:700;color:#ffffff;white-space:pre;line-height:normal;letter-spacing:0.800px;-webkit-text-stroke:0.35px #ffffff;">Add Contact</span>
<div style="position:absolute;left:1654px;top:703px;width:249px;height:1px;background:#4a4a4a;"></div>
<div style="position:absolute;left:1654px;top:704px;width:249px;height:125px;background:#333333;"></div>
<svg style="position:absolute;left:1674px;top:713px;" width="20" height="20" viewBox="0 0 20 20"><g transform="translate(9.6,10)"><circle r="7.4" fill="#808080"/><rect x="-2.3" y="-9.4" width="4.6" height="4" rx="0.6" fill="#808080" transform="rotate(0)"/><rect x="-2.3" y="-9.4" width="4.6" height="4" rx="0.6" fill="#808080" transform="rotate(60)"/><rect x="-2.3" y="-9.4" width="4.6" height="4" rx="0.6" fill="#808080" transform="rotate(120)"/><rect x="-2.3" y="-9.4" width="4.6" height="4" rx="0.6" fill="#808080" transform="rotate(180)"/><rect x="-2.3" y="-9.4" width="4.6" height="4" rx="0.6" fill="#808080" transform="rotate(240)"/><rect x="-2.3" y="-9.4" width="4.6" height="4" rx="0.6" fill="#808080" transform="rotate(300)"/><circle r="2.7" fill="#333333"/></g></svg>
<span id="t_auto1" style="position:absolute;left:1698.5px;top:717.7px;font-size:13.5px;font-weight:400;color:#c4c4c4;white-space:pre;line-height:normal;letter-spacing:0.952px;">Your account is not set up</span>
<span id="t_auto2" style="position:absolute;left:1675.0px;top:735px;font-size:13.5px;font-weight:400;color:#c4c4c4;white-space:pre;line-height:normal;letter-spacing:1.238px;">for automatic payment.</span>
<span id="t_auto3" style="position:absolute;left:1674.5px;top:754.7px;font-size:13.5px;font-weight:400;color:#c4c4c4;white-space:pre;line-height:normal;letter-spacing:0.966px;">Change this?</span>
<div style="position:absolute;left:1654px;top:783px;width:249px;height:1px;background:#444444;"></div>
<span id="t_credits" style="position:absolute;left:1674.5px;top:797.7px;font-size:14px;font-weight:400;color:#c4c4c4;white-space:pre;line-height:normal;letter-spacing:0.480px;">Credits: $0.00 USD</span>
<div style="position:absolute;left:1654px;top:829px;width:249px;height:1px;background:#444444;"></div>
</body></html>
